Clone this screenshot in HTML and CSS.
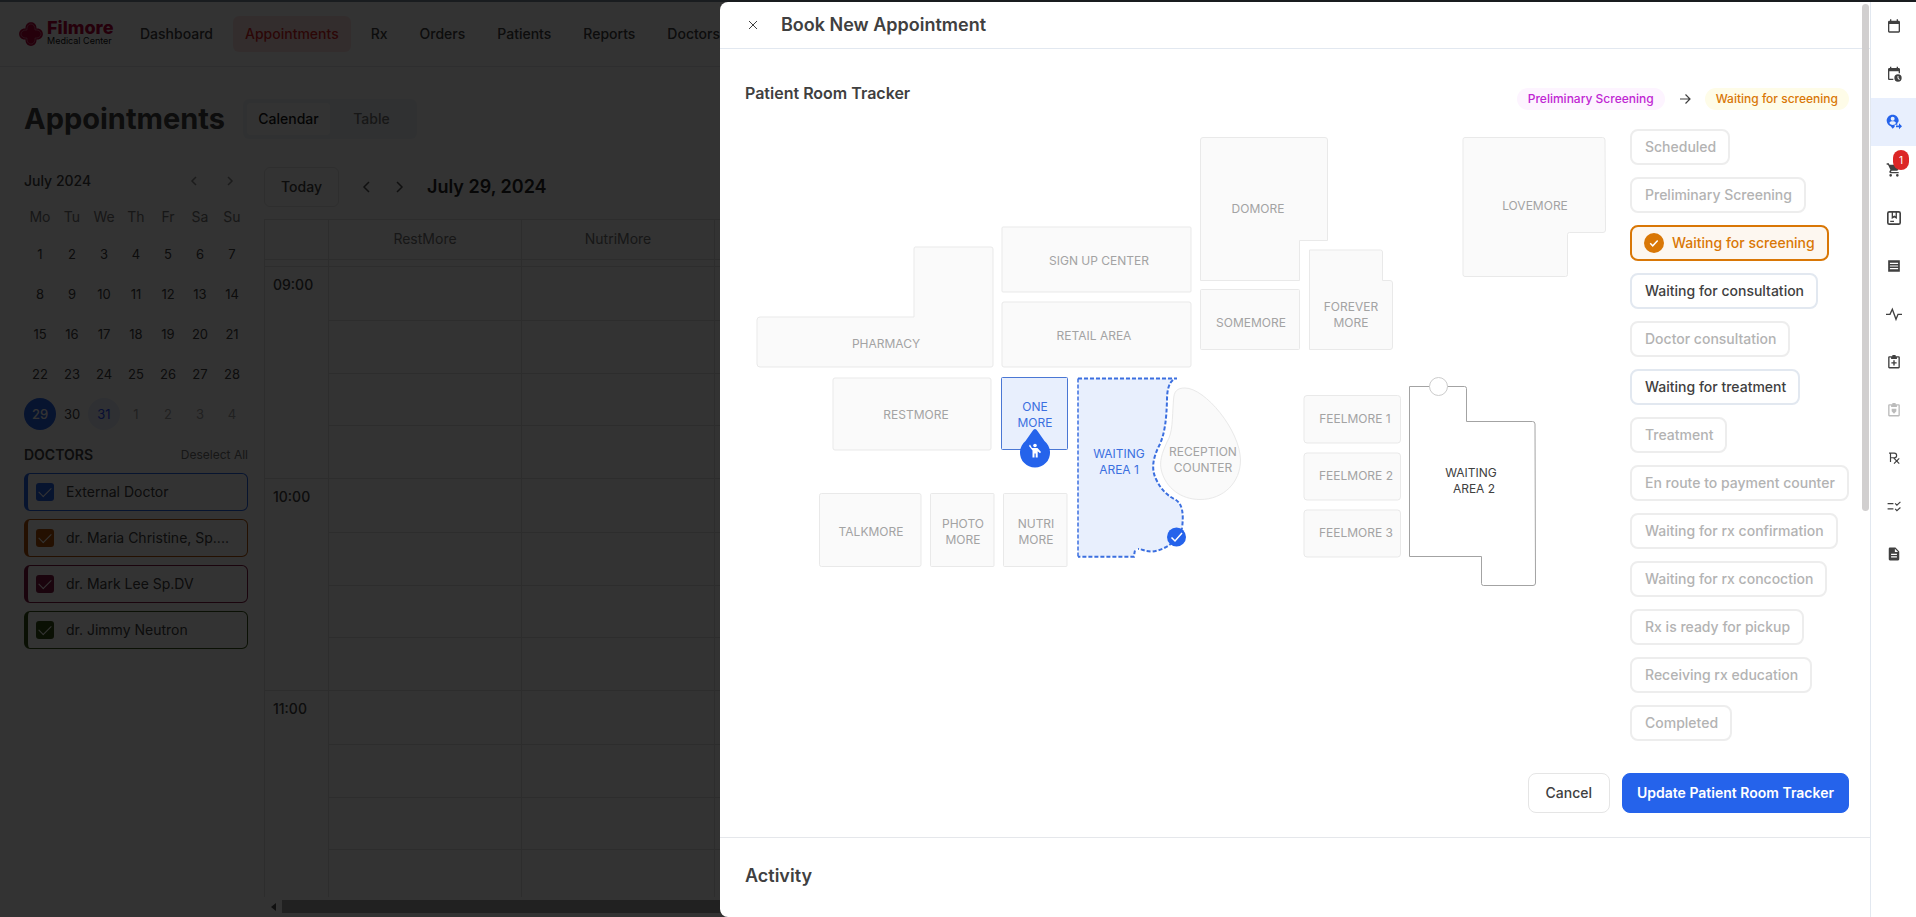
FILE: index.html
```html
<!DOCTYPE html>
<html lang="en">
<head>
<meta charset="utf-8">
<title>Filmore Medical Center – Appointments</title>
<link rel="stylesheet" href="styles.css">
</head>
<body>
<div class="app">
  <header class="topbar">
    <a class="brand" href="#">
      <svg class="brand-mark" viewBox="0 0 26 26" aria-hidden="true">
        <path d="M7.500 7.500C7 -1 19 -1 18.500 7.500C27 7 27 19 18.500 18.500C19 27 7 27 7.500 18.500C-1 19 -1 7 7.500 7.500Z" fill="#b8003a"/>
        <path d="M9 9C8.500 1 17.500 1 17 9C25 8.500 25 17.500 17 17C17.500 25 8.500 25 9 17C1 17.500 1 8.500 9 9Z" fill="none" stroke="#fff" stroke-opacity=".5" stroke-width=".7"/>
      </svg>
      <span class="brand-text"><span class="brand-name">Filmore</span><span class="brand-sub">Medical Center</span></span>
    </a>
    <nav class="nav">
      <a href="#">Dashboard</a>
      <a href="#" class="current">Appointments</a>
      <a href="#">Rx</a>
      <a href="#">Orders</a>
      <a href="#">Patients</a>
      <a href="#">Reports</a>
      <a href="#">Doctors</a>
    </nav>
  </header>

  <div class="page-head">
    <h1>Appointments</h1>
    <div class="segmented">
      <button class="on" type="button">Calendar</button>
      <button type="button">Table</button>
    </div>
  </div>

  <div class="workspace">
    <aside class="side">
      <div class="month-head">
        <span>July 2024</span>
        <div class="month-nav">
          <button type="button" aria-label="Previous month"><svg viewBox="0 0 16 16"><path d="M10 4 6 8l4 4"/></svg></button>
          <button type="button" aria-label="Next month"><svg viewBox="0 0 16 16"><path d="m6 4 4 4-4 4"/></svg></button>
        </div>
      </div>
      <table class="month">
        <thead><tr><th>Mo</th><th>Tu</th><th>We</th><th>Th</th><th>Fr</th><th>Sa</th><th>Su</th></tr></thead>
        <tbody>
          <tr><td>1</td><td>2</td><td>3</td><td>4</td><td>5</td><td>6</td><td>7</td></tr>
          <tr><td>8</td><td>9</td><td>10</td><td>11</td><td>12</td><td>13</td><td>14</td></tr>
          <tr><td>15</td><td>16</td><td>17</td><td>18</td><td>19</td><td>20</td><td>21</td></tr>
          <tr><td>22</td><td>23</td><td>24</td><td>25</td><td>26</td><td>27</td><td>28</td></tr>
          <tr><td><span class="day picked">29</span></td><td>30</td><td><span class="day today">31</span></td><td class="out">1</td><td class="out">2</td><td class="out">3</td><td class="out">4</td></tr>
        </tbody>
      </table>
      <div class="doctors-head"><h2>DOCTORS</h2><button type="button">Deselect All</button></div>
      <div class="doctors">
        <label class="doctor blue"><input type="checkbox" checked><span>External Doctor</span></label>
        <label class="doctor orange"><input type="checkbox" checked><span>dr. Maria Christine, Sp....</span></label>
        <label class="doctor wine"><input type="checkbox" checked><span>dr. Mark Lee Sp.DV</span></label>
        <label class="doctor green"><input type="checkbox" checked><span>dr. Jimmy Neutron</span></label>
      </div>
    </aside>

    <main class="schedule">
      <div class="schedule-head">
        <button class="today-btn" type="button">Today</button>
        <div class="day-nav">
          <button type="button" aria-label="Previous day"><svg viewBox="0 0 16 16"><path d="M10 3 5 8l5 5"/></svg></button>
          <button type="button" aria-label="Next day"><svg viewBox="0 0 16 16"><path d="m6 3 5 5-5 5"/></svg></button>
        </div>
        <h2>July 29, 2024</h2>
      </div>
      <div class="grid">
        <div class="grid-row rooms"><span></span><span>RestMore</span><span>NutriMore</span><span></span></div>
        <div class="grid-row spacer"><span></span><span></span><span></span><span></span></div>
        <div class="grid-row hour"><time>09:00</time><div class="slots"><i></i><i></i><i></i><i></i></div><div class="slots"><i></i><i></i><i></i><i></i></div><div class="slots"><i></i><i></i><i></i><i></i></div></div>
        <div class="grid-row hour"><time>10:00</time><div class="slots"><i></i><i></i><i></i><i></i></div><div class="slots"><i></i><i></i><i></i><i></i></div><div class="slots"><i></i><i></i><i></i><i></i></div></div>
        <div class="grid-row hour"><time>11:00</time><div class="slots"><i></i><i></i><i></i><i></i></div><div class="slots"><i></i><i></i><i></i><i></i></div><div class="slots"><i></i><i></i><i></i><i></i></div></div>
      </div>
      <div class="hscroll"><svg viewBox="0 0 8 10"><path d="M7 1v8L2 5z"/></svg><div class="hthumb"></div></div>
    </main>
  </div>
</div>

<div class="backdrop"></div>

<section class="drawer" role="dialog" aria-labelledby="drawer-title">
  <div class="panel">
    <header class="panel-head">
      <button type="button" class="close" aria-label="Close"><svg viewBox="0 0 16 16"><path d="m4 4 8 8M12 4l-8 8"/></svg></button>
      <h2 id="drawer-title">Book New Appointment</h2>
    </header>
    <div class="panel-body">
      <div class="tracker-head">
        <h3>Patient Room Tracker</h3>
        <div class="transition">
          <span class="tag pink">Preliminary Screening</span>
          <svg viewBox="0 0 16 16"><path d="M3 8h10M8.500 3.500 13 8l-4.500 4.500"/></svg>
          <span class="tag amber">Waiting for screening</span>
        </div>
      </div>
      <div class="tracker">
        <svg class="map" viewBox="745 129 865 470" role="img" aria-label="Clinic floor map">
          <g class="room">
            <path d="M915 247h76q2 0 2 2v116q0 2-2 2H760q-3 0-3-3v-44q0-3 3-3h154v-68q0-2 1-2z"/>
            <rect x="1002" y="227" width="189" height="65" rx="1"/>
            <rect x="1002" y="302" width="189" height="65" rx="2"/>
            <path d="M1203 137.500h122q2.500 0 2.500 2.500v100.500h-28v40h-99V140q0-2.500 2.500-2.500z"/>
            <rect x="1200.500" y="289.500" width="99" height="60" rx="1"/>
            <path d="M1309.500 250h71q2 0 2 2v28.500h7.500q2.500 0 2.500 2.500v64q0 2.500-2.500 2.500h-80.500z"/>
            <path d="M1465 137.500h137.500q2.500 0 2.500 2.500l.5 90q0 2.500-2.500 2.500h-33.500q-2 0-2 2v40q0 2-2 2H1465q-2 0-2-2V139.500q0-2 2-2z"/>
            <rect x="833" y="378" width="158" height="72" rx="2"/>
            <rect x="819.500" y="493.500" width="101.500" height="73" rx="2"/>
            <rect x="930.500" y="493.500" width="63.500" height="73" rx="1"/>
            <rect x="1003.500" y="493.500" width="63.500" height="73" rx="1"/>
            <rect x="1304" y="395.500" width="96.500" height="47.500" rx="3"/>
            <rect x="1304" y="453" width="96.500" height="47" rx="3"/>
            <rect x="1304" y="510" width="96.500" height="47" rx="3"/>
            <path d="M1185 388C1177 388 1174 391 1173.500 400C1172 420 1173 432 1167 442C1162 453 1159 462 1161.500 471C1166 488 1181 499.500 1200 499.500C1224 499.500 1240.500 482 1240.500 460C1240 430 1205 388 1185 388Z"/>
          </g>
          <path class="open-room" d="M1409.500 386.500h55q2 0 2 2v33h66q2.500 0 2.500 2.500l.5 159q0 2.500-2.500 2.500h-49.500q-2 0-2-2v-27h-72z"/>
          <circle class="door" cx="1438.500" cy="386.500" r="9"/>
          <rect class="picked-room" x="1001.500" y="377.500" width="66" height="72" rx="1"/>
          <path class="area-fill" d="M1078 378.500H1174C1169 383 1167 390 1167 400C1166.500 418 1165 434 1159 446C1153 458 1151 469 1156 479C1161 490 1168 496 1176 500C1182 504 1184 513 1182 528C1179 540 1166 550 1152 551.500C1145 551.500 1142 549 1138 549Q1134 548 1134.500 556.500H1078Z"/>
          <path class="area-line thick" d="M1078 378.500H1177M1173 380C1169 383 1167 390 1167 400C1166.500 418 1165 434 1159 446C1153 458 1151 469 1156 479C1161 490 1168 496 1176 500C1182 504 1184 513 1182 528C1179 540 1166 550 1152 551.500C1145 551.500 1142 549 1138 549"/>
          <path class="area-line" d="M1078 378.500V556.500"/>
          <path class="area-line thick" d="M1135 550.500Q1134.500 552 1134 556.800H1078"/>
          <circle class="solid" cx="1176.500" cy="537" r="9.500"/>
          <path class="tick" d="m1171.500 537.500 3.500 3.500 7-8"/>
          <g class="labels">
            <text x="1099" y="265">SIGN UP CENTER</text>
            <text x="1094" y="340">RETAIL AREA</text>
            <text x="886" y="348">PHARMACY</text>
            <text x="916" y="419">RESTMORE</text>
            <text x="871" y="536">TALKMORE</text>
            <text x="963" y="528">PHOTO</text><text x="963" y="544">MORE</text>
            <text x="1036" y="528">NUTRI</text><text x="1036" y="544">MORE</text>
            <text x="1203" y="456">RECEPTION</text><text x="1203" y="472">COUNTER</text>
            <text x="1258" y="213">DOMORE</text>
            <text x="1535" y="210">LOVEMORE</text>
            <text x="1251" y="327">SOMEMORE</text>
            <text x="1351" y="311">FOREVER</text><text x="1351" y="327">MORE</text>
            <text x="1355" y="423">FEELMORE 1</text>
            <text x="1356" y="480">FEELMORE 2</text>
            <text x="1356" y="537">FEELMORE 3</text>
          </g>
          <g class="labels active"><text x="1035" y="411">ONE</text><text x="1035" y="427">MORE</text><text x="1119" y="458">WAITING</text><text x="1119" y="474">AREA 1</text></g>
          <g class="labels dark"><text x="1471" y="477">WAITING</text><text x="1474" y="493">AREA 2</text></g>
          <path class="solid" d="M1032.500 431q2.500-4 5 0L1044.500 441A15 15 0 1 1 1025.500 441Z"/>
          <g fill="#fff"><circle cx="1035" cy="445.500" r="1.800"/><path d="M1030 444.500 1032 448h5.500l3.500 4-1 1.200-2.300-2V457.500h-2v-4h-1.200v4h-2V450.500L1029 446z"/></g>
        </svg>
        <div class="statuses">
          <button type="button" disabled>Scheduled</button>
          <button type="button" disabled>Preliminary Screening</button>
          <button type="button" class="selected"><svg viewBox="0 0 20 20"><circle cx="10" cy="10" r="10"/><path d="m6.200 10.300 2.500 2.500 5-5.300"/></svg>Waiting for screening</button>
          <button type="button">Waiting for consultation</button>
          <button type="button" disabled>Doctor consultation</button>
          <button type="button">Waiting for treatment</button>
          <button type="button" disabled>Treatment</button>
          <button type="button" disabled>En route to payment counter</button>
          <button type="button" disabled>Waiting for rx confirmation</button>
          <button type="button" disabled>Waiting for rx concoction</button>
          <button type="button" disabled>Rx is ready for pickup</button>
          <button type="button" disabled>Receiving rx education</button>
          <button type="button" disabled>Completed</button>
        </div>
      </div>
      <div class="actions">
        <button type="button" class="btn">Cancel</button>
        <button type="button" class="btn primary">Update Patient Room Tracker</button>
      </div>
    </div>
    <section class="activity"><h2>Activity</h2></section>
    <div class="vthumb"></div>
  </div>
  <nav class="rail" aria-label="Appointment sections">
    <a href="#" aria-label="Calendar"><svg class="wide" viewBox="0 0 24 24"><path d="M19 4h-1V2h-2v2H8V2H6v2H5c-1.100 0-2 .9-2 2v14c0 1.100.9 2 2 2h14c1.100 0 2-.9 2-2V6c0-1.100-.9-2-2-2zm0 16H5V9h14z"/></svg></a>
    <a href="#" aria-label="Reschedule"><svg class="wide" viewBox="0 0 24 24"><path d="M5 8h14v3h2V5c0-1.100-.9-2-2-2h-1V1h-2v2H8V1H6v2H5c-1.100 0-2 .9-2 2v14c0 1.100.9 2 2 2h6v-2H5z"/><path fill-rule="evenodd" d="M18 12.500a5.500 5.500 0 1 0 0 11 5.500 5.500 0 0 0 0-11zm-.7 2.500h1.400v3l2 2-1 1-2.400-2.500z"/></svg></a>
    <a href="#" class="active" aria-label="Room tracker"><svg class="wide" viewBox="0 0 24 24"><path fill-rule="evenodd" d="M10 1C5 1 1 5 1 10c0 4 3 7 6 8.500L10 22l3-3v-3h4v-2.500c1.300-1 2-2.200 2-3.500 0-5-4-9-9-9zm0 3a3 3 0 1 1 0 6 3 3 0 0 1 0-6zm-5 9.500C6 11.500 8 11 10 11s4 .5 5 2.500C14 15.500 12 16.500 10 16.500s-4-1-5-3z"/><path d="M15 17.200h4.500V14l4.500 4.500-4.500 4.500v-3.200H15z"/></svg></a>
    <a href="#" aria-label="Cart"><svg class="wide" viewBox="0 0 24 24"><path d="M7 18a2 2 0 1 0 0 4 2 2 0 0 0 0-4zM1 2v2h2l3.600 7.600L5.200 14c-.7 1.300.3 3 1.800 3h12v-2H7.400l1-1.800h7.500c.7 0 1.400-.4 1.700-1L21.200 5.500A1 1 0 0 0 20 4H5.200l-.9-2zm16 16a2 2 0 1 0 0 4 2 2 0 0 0 0-4z"/></svg><span class="count">1</span></a>
    <a href="#" aria-label="Records"><svg viewBox="0 0 24 24"><path fill-rule="evenodd" d="M4 0h16q4 0 4 4v16q0 4-4 4H4q-4 0-4-4V4q0-4 4-4zm0 2.800Q2.800 2.800 2.800 4v16q0 1.200 1.200 1.200h16q1.200 0 1.200-1.200V4q0-1.200-1.200-1.200h-3V13.500L12.500 11 8 13.500V2.800zm6.300 0v6.400l2.200-1.400 2.200 1.400V2.800zM5.500 16.500H12V19H5.500z"/></svg></a>
    <a href="#" aria-label="Invoice"><svg viewBox="0 0 24 24"><path fill-rule="evenodd" d="M2 2h20v20H2zM5 6.500v2h14v-2zm0 4.500v2h14v-2zm0 4.500v2h14v-2z"/></svg></a>
    <a href="#" aria-label="Vitals"><svg class="wide" viewBox="0 0 24 24"><path class="line" d="M0 12.500h6L9.500 5l5.500 15 3-7.500h6"/></svg></a>
    <a href="#" aria-label="Diagnosis"><svg viewBox="0 0 24 24"><path fill-rule="evenodd" d="M9 2a3 3 0 0 1 6 0h5q2 0 2 2v17q0 2-2 2H4q-2 0-2-2V4q0-2 2-2zM4.300 4.300v16.400h15.400V4.300H17V7H7V4.300zM10.800 9h2.400v3.300h3.300v2.400h-3.300V18h-2.400v-3.300H7.500v-2.400h3.300z"/></svg></a>
    <a href="#" class="off" aria-label="Treatment"><svg viewBox="0 0 24 24"><path fill-rule="evenodd" d="M9 2a3 3 0 0 1 6 0h5q2 0 2 2v17q0 2-2 2H4q-2 0-2-2V4q0-2 2-2zM4.300 4.300v16.400h15.400V4.300H17V7H7V4.300zM8 10h8v4l-4 4.500L8 14z"/></svg></a>
    <a href="#" aria-label="Prescription"><svg viewBox="0 0 24 24"><path class="line" d="M6 19V3.500h6.500a4 4 0 0 1 0 8H6m5 0 10 10M21 12.500l-9 9M3.500 3.500H7"/></svg></a>
    <a href="#" aria-label="Checklist"><svg viewBox="0 0 24 24"><path class="line" d="M1 8h10M1 17h10M14 7.500l3 3L23 5M14 17l3 3 6-5.500"/></svg></a>
    <a href="#" aria-label="Notes"><svg viewBox="0 0 24 24"><path fill-rule="evenodd" d="M14.500 1H5Q3 1 3 3v18q0 2 2 2h14q2 0 2-2V7.500zM7 11.500h10v2H7zm0 4.500h10v2H7zM13.500 3v5.500H19z"/></svg></a>
  </nav>
</section>
</body>
</html>
```

FILE: styles.css
```css
* { box-sizing: border-box; }

body {
  margin: 0;
  height: 100vh;
  overflow: hidden;
  font: 14px/20px Inter, "Liberation Sans", sans-serif;
  color: #404040;
  background: #fff;
}

h1, h2, h3 { margin: 0; }
a { color: inherit; text-decoration: none; }
button {
  font: inherit;
  color: inherit;
  background: none;
  border: 0;
  padding: 0;
}
svg { display: block; }

/* Page behind the drawer */
.app {
  display: flex;
  flex-direction: column;
  height: 100vh;
  border-top: 2px solid #7d8c9b;
  overflow: hidden;
}
.topbar {
  display: flex;
  align-items: center;
  flex: none;
  height: 65px;
  gap: 15px;
  padding: 0 18px;
  border-bottom: 1px solid #e5e7eb;
}
.brand { display: flex; align-items: center; gap: 3px; }
.brand-mark { width: 26px; height: 26px; }
.brand-text { display: flex; flex-direction: column; width: 66px; }
.brand-name { font-size: 18px; line-height: 14px; font-weight: 800; color: #b8003a; }
.brand-sub { font-size: 9px; line-height: 12px; color: #111; white-space: nowrap; }
.nav { display: flex; gap: 8px; font-weight: 500; }
.nav a { padding: 8px 12px; border-radius: 6px; }
.nav .current { color: #dc2626; background: #fee2e2; }

.page-head {
  display: flex;
  align-items: center;
  flex: none;
  gap: 18px;
  padding: 32px 24px 27px;
}
.page-head h1 { font-size: 29px; line-height: 36px; font-weight: 700; }
.segmented {
  display: grid;
  grid-template-columns: 1fr 1fr;
  width: 174px;
  padding: 4px;
  border-radius: 6px;
  background: #f1f5f9;
  color: #737373;
}
.segmented button { height: 32px; border-radius: 4px; font-weight: 500; }
.segmented .on { background: #fff; color: #171717; }

.workspace { display: flex; flex: 1; gap: 16px; min-height: 0; padding-left: 24px; }
.side { flex: none; width: 224px; }
.month-head { display: flex; justify-content: space-between; align-items: center; height: 30px; font-weight: 500; }
.month-nav { display: flex; gap: 20px; padding-right: 10px; }
.month-nav svg { width: 16px; height: 16px; }
.month-nav path, .day-nav path { fill: none; stroke: #525252; stroke-width: 1.500; }
.month-nav path { stroke: #8a8a8a; }
.month { border-collapse: collapse; table-layout: fixed; width: 224px; }
.month th, .month td { padding: 0; text-align: center; }
.month th { height: 38px; padding-top: 4px; font-weight: 400; color: #737373; }
.month td { height: 40px; font-size: 13px; }
.month .out { color: #a3a3a3; }
.day { display: block; width: 32px; line-height: 32px; border-radius: 50%; }
.day.picked { background: #2563eb; color: #fff; font-weight: 500; }
.day.today { background: #e8effd; color: #2b4dff; }
.doctors-head { display: flex; justify-content: space-between; align-items: center; height: 39px; padding-top: 2px; }
.doctors-head h2 { font-size: 14px; line-height: 20px; font-weight: 600; }
.doctors-head button { font-size: 12px; color: #737373; }
.doctors { display: grid; gap: 8px; }
.doctor {
  display: flex;
  align-items: center;
  gap: 12px;
  height: 38px;
  padding-left: 8px;
  border: 1px solid var(--tone);
  border-left-width: 4px;
  border-radius: 6px;
}
.doctor input {
  display: grid;
  place-items: center;
  appearance: none;
  width: 18px;
  height: 18px;
  margin: 0;
  border-radius: 3px;
  background: var(--tone);
}
.doctor input::before {
  content: "";
  width: 11px;
  height: 6px;
  margin-bottom: 3px;
  border: solid #fff;
  border-width: 0 0 1px 1px;
  rotate: -45deg;
}
.blue { --tone: #2563eb; }
.orange { --tone: #b45309; }
.wine { --tone: #831843; }
.green { --tone: #365314; }

.schedule { flex: 1; min-width: 0; display: flex; flex-direction: column; padding-top: 1px; }
.schedule-head { display: flex; align-items: center; height: 40px; }
.today-btn { width: 75px; height: 40px; border: 1px solid #e5e5e5; border-radius: 6px; font-weight: 500; }
.day-nav { display: flex; gap: 16px; padding: 0 20px; }
.day-nav svg { width: 16px; height: 16px; }
.schedule-head h2 { font-size: 18px; line-height: 28px; font-weight: 600; color: #262626; }
.grid {
  flex: 1;
  min-height: 0;
  overflow: hidden;
  margin-top: 12px;
  border-left: 1px solid #e0e0e0;
  border-top: 1px solid #e0e0e0;
}
.grid-row { display: grid; grid-template-columns: 64px 193px 193px 1fr; border-bottom: 1px solid #e0e0e0; }
.grid-row > * { border-right: 1px solid #e0e0e0; }
.rooms { height: 40px; line-height: 37px; text-align: center; color: #737373; }
.spacer { height: 7px; }
.hour { height: 212px; font-weight: 500; }
.hour time { padding: 8px; }
.slots { display: grid; grid-template-rows: repeat(4, 1fr); }
.slots i + i { border-top: 1px solid #e0e0e0; }
.hscroll { display: flex; align-items: center; gap: 5px; height: 20px; padding: 3px 0 4px 5px; }
.hscroll svg { width: 8px; height: 10px; fill: #505050; }
.hthumb { flex: 1; height: 13px; background: #a3a3a3; }

.backdrop { position: fixed; inset: 0; background: rgba(0, 0, 0, .8); }

/* Drawer */
.drawer {
  position: fixed;
  inset: 2px 0 0 720px;
  display: flex;
  overflow: hidden;
  border-radius: 8px 0 0 8px;
  background: #fff;
}
.panel { flex: 1; position: relative; min-width: 0; }
.panel-head {
  display: flex;
  align-items: center;
  gap: 20px;
  height: 47px;
  padding-left: 25px;
  border-bottom: 1px solid #e2e8f0;
}
.panel-head h2 { font-size: 18px; line-height: 28px; font-weight: 600; }
.close svg { width: 16px; height: 16px; }
.close path, .transition path { fill: none; stroke: #404040; stroke-width: 1.200; }
.close path { stroke-width: 1; }
.panel-body { padding: 34px 21px 24px 25px; border-bottom: 1px solid #e5e7eb; }
.tracker-head { display: flex; justify-content: space-between; height: 46px; }
.tracker-head h3 { font-size: 16px; line-height: 20px; font-weight: 600; }
.transition { display: flex; align-items: center; align-self: flex-start; gap: 12px; padding-top: 5px; }
.transition svg { width: 16px; height: 16px; }
.tag { padding: 0 11px; border-radius: 11px; font-size: 12px; line-height: 22px; font-weight: 500; }
.pink { color: #c026d3; background: #fdf4ff; }
.amber { color: #d97706; background: #fefce8; }

.tracker { display: grid; grid-template-columns: minmax(0, 1fr) 219px; gap: 20px; }
.map { width: 100%; }
.room > * { fill: #fafafa; stroke: #e9e9e9; }
.open-room { fill: #fff; stroke: #a3a3a3; }
.door { fill: #fff; stroke: #ccc; }
.picked-room { fill: #e8effd; stroke: #4a77d4; }
.area-fill { fill: #e8effd; }
.area-line { fill: none; stroke: #3b6fe0; stroke-width: 1.500; stroke-dasharray: 4 2; }
.area-line.thick { stroke-width: 2; }
.solid { fill: #2563eb; }
.tick { fill: none; stroke: #fff; stroke-width: 1.500; }
.labels { font-size: 12px; text-anchor: middle; fill: #a3a3a3; }
.labels.active { fill: #3b6fe0; }
.labels.dark { fill: #404040; }

.statuses { display: flex; flex-direction: column; align-items: flex-start; gap: 12px; }
.statuses button {
  display: flex;
  align-items: center;
  gap: 8px;
  height: 36px;
  padding: 0 12px 0 13px;
  border: 2px solid #e2e8f0;
  border-radius: 8px;
  font-weight: 500;
  white-space: nowrap;
}
.statuses button:disabled { color: #b3b3b3; border-color: #ededed; }
.statuses .selected { padding: 0 12px; color: #d97706; border-color: #d97706; background: #fdf7f0; }
.selected svg { width: 20px; height: 20px; }
.selected circle { fill: #d97706; }
.selected path { fill: none; stroke: #fff; stroke-width: 1.500; }

.actions { display: flex; justify-content: flex-end; gap: 12px; margin-top: 32px; }
.btn { height: 40px; padding: 0 17px; border: 1px solid #e5e5e5; border-radius: 8px; font-weight: 500; }
.btn.primary { padding: 0 14px; color: #fff; background: #2563eb; border-color: #2563eb; font-weight: 600; }

.activity { padding: 24px 25px; }
.activity h2 { font-size: 18px; line-height: 28px; font-weight: 600; }
.vthumb { position: absolute; top: 2px; right: 1px; width: 7px; height: 507px; border-radius: 4px; background: #d1cfcf; }

.rail { flex: none; width: 46px; border-left: 1px solid #e2e8f0; }
.rail a { position: relative; display: grid; place-items: center; height: 48px; }
.rail svg { width: 14px; height: 14px; fill: #404040; }
.rail svg.wide { width: 16px; height: 16px; }
.rail .line { fill: none; stroke: #404040; stroke-width: 2; }
.rail .active { background: #e8effd; }
.rail .active svg { fill: #2563eb; }
.rail .off { opacity: .35; }
.count {
  position: absolute;
  top: 4px;
  right: 7px;
  width: 16px;
  border-radius: 8px;
  background: #dc2626;
  color: #fff;
  font-size: 10px;
  line-height: 20px;
  text-align: center;
}
```
